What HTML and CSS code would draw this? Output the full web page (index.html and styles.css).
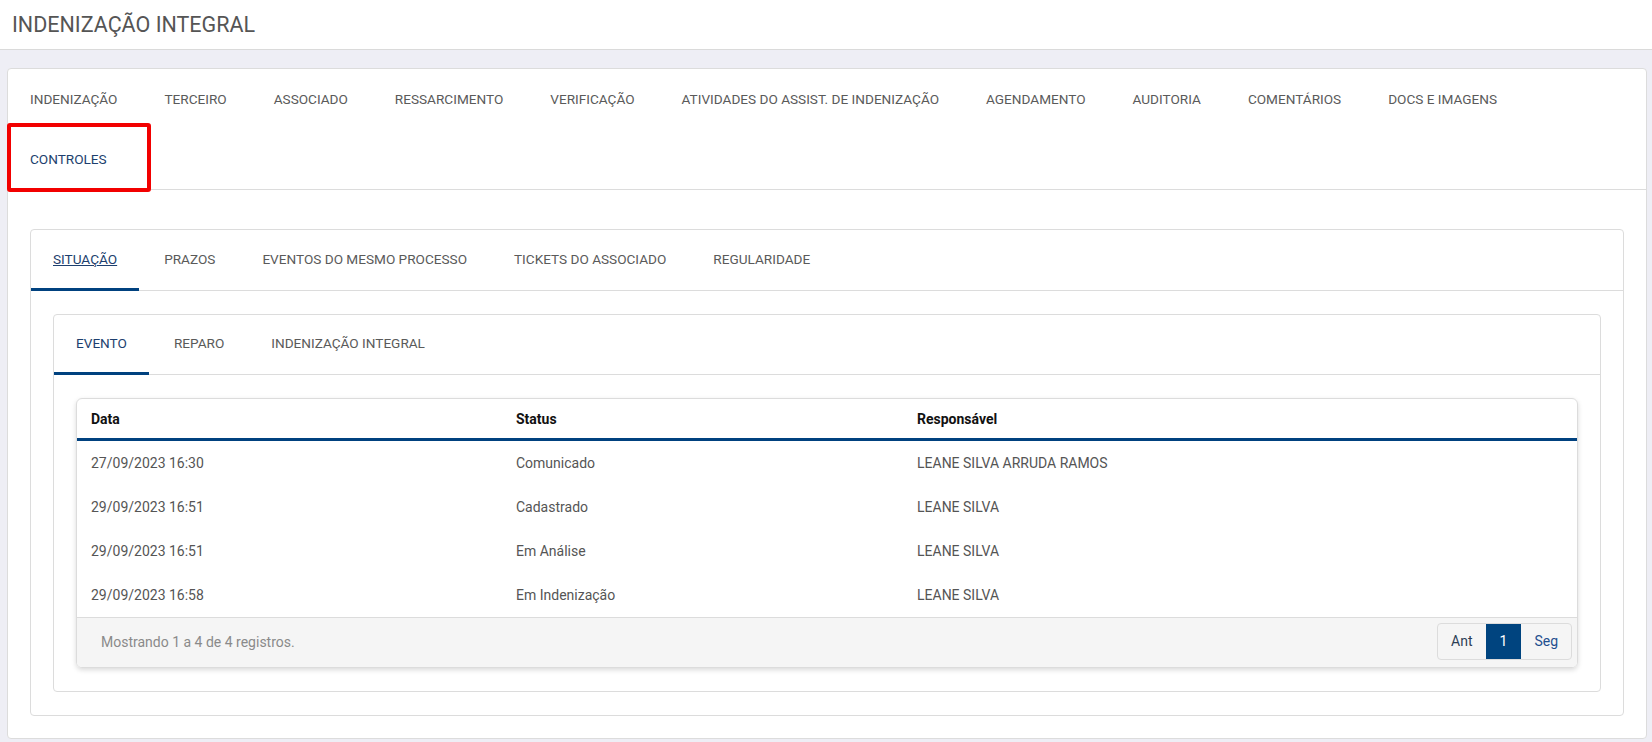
FILE: index.html
```html
<!DOCTYPE html>
<html lang="pt-BR">
<head>
  <meta charset="UTF-8">
  <title>Indenização Integral</title>
  <link rel="stylesheet" href="styles.css">
</head>
<body>

  <header class="page-header">
    <h1>INDENIZAÇÃO INTEGRAL</h1>
  </header>

  <div class="main-card">
    <ul class="main-tabs">
      <li><a href="#">INDENIZAÇÃO</a></li>
      <li><a href="#">TERCEIRO</a></li>
      <li><a href="#">ASSOCIADO</a></li>
      <li><a href="#">RESSARCIMENTO</a></li>
      <li><a href="#">VERIFICAÇÃO</a></li>
      <li><a href="#">ATIVIDADES DO ASSIST. DE INDENIZAÇÃO</a></li>
      <li><a href="#">AGENDAMENTO</a></li>
      <li><a href="#">AUDITORIA</a></li>
      <li><a href="#">COMENTÁRIOS</a></li>
      <li><a href="#">DOCS E IMAGENS</a></li>
      <li class="active marked"><a href="#">CONTROLES</a></li>
    </ul>

    <div class="sub-card">
      <ul class="sub-tabs">
        <li class="active"><a href="#" class="underlined">SITUAÇÃO</a></li>
        <li><a href="#">PRAZOS</a></li>
        <li><a href="#">EVENTOS DO MESMO PROCESSO</a></li>
        <li><a href="#">TICKETS DO ASSOCIADO</a></li>
        <li><a href="#">REGULARIDADE</a></li>
      </ul>

      <div class="sub-card inner">
        <ul class="sub-tabs small">
          <li class="active"><a href="#">EVENTO</a></li>
          <li><a href="#">REPARO</a></li>
          <li><a href="#">INDENIZAÇÃO INTEGRAL</a></li>
        </ul>

        <div class="table-card">
          <table>
            <thead>
              <tr>
                <th class="col-data">Data</th>
                <th class="col-status">Status</th>
                <th>Responsável</th>
              </tr>
            </thead>
            <tbody>
              <tr><td>27/09/2023 16:30</td><td>Comunicado</td><td>LEANE SILVA ARRUDA RAMOS</td></tr>
              <tr><td>29/09/2023 16:51</td><td>Cadastrado</td><td>LEANE SILVA</td></tr>
              <tr><td>29/09/2023 16:51</td><td>Em Análise</td><td>LEANE SILVA</td></tr>
              <tr><td>29/09/2023 16:58</td><td>Em Indenização</td><td>LEANE SILVA</td></tr>
            </tbody>
          </table>
          <div class="table-footer">
            <span class="info">Mostrando 1 a 4 de 4 registros.</span>
            <div class="pagination">
              <a href="#" class="prev">Ant</a>
              <a href="#" class="current">1</a>
              <a href="#" class="next">Seg</a>
            </div>
          </div>
        </div>
      </div>
    </div>
  </div>

</body>
</html>
```

FILE: styles.css
```css
body {
  font-family: Roboto, "Noto Sans", sans-serif;
  margin: 0;
  padding: 0;
  background: #eeeef5;
  color: #555;
  font-size: 14px;
}

a {
  text-decoration: none;
  color: inherit;
}

.page-header {
  background: #fff;
  height: 49px;
  border-bottom: 1px solid #dadada;
  display: flex;
  align-items: center;
  padding-left: 12px;
}

.page-header h1 {
  margin: 0;
  font-size: 21.5px;
  font-weight: 400;
  color: #555;
}

.main-card {
  background: #fff;
  border: 1px solid #dcdcdc;
  border-radius: 4px;
  margin: 18px 5px 0 7px;
  padding-bottom: 22px;
}

.main-tabs {
  list-style: none;
  margin: 0;
  padding: 0 60px 0 0;
  display: flex;
  flex-wrap: wrap;
  border-bottom: 1px solid #dcdcdc;
  font-size: 13.6px;
}

.main-tabs li {
  margin-right: 3px;
  position: relative;
}

.main-tabs a {
  display: block;
  padding: 0 22px;
  line-height: 60px;
  color: #5a5a5a;
}

.main-tabs li.active a {
  color: #1d3f6e;
}

.main-tabs li.marked::after {
  content: "";
  position: absolute;
  left: -1px;
  top: -6px;
  width: 144px;
  height: 69px;
  box-sizing: border-box;
  border: 4px solid #f20000;
  border-radius: 3px;
}

.sub-card {
  background: #fff;
  border: 1px solid #dcdcdc;
  border-radius: 4px;
  margin: 39px 22px 0 22px;
  padding-bottom: 23px;
}

.sub-card.inner {
  margin: 23px 22px 0 22px;
}

.sub-tabs {
  list-style: none;
  margin: 0;
  padding: 0;
  display: flex;
  border-bottom: 1px solid #dcdcdc;
  font-size: 13.6px;
}

.sub-tabs li {
  margin-right: 3px;
  margin-bottom: -1px;
  border-bottom: 3px solid transparent;
}

.sub-tabs li.active {
  border-bottom-color: #00417f;
}

.sub-tabs a {
  display: block;
  padding: 0 22px;
  line-height: 58px;
  color: #5a5a5a;
}

.sub-tabs.small a {
  line-height: 57px;
}

.sub-tabs li.active a {
  color: #1d3f6e;
}

.sub-tabs a.underlined {
  text-decoration: underline;
}

.table-card {
  margin: 23px 22px 0 22px;
  border: 1px solid #dcdcdc;
  border-radius: 6px;
  overflow: hidden;
  box-shadow: 0 2px 5px rgba(0, 0, 0, 0.15);
}

table {
  width: 100%;
  border-collapse: collapse;
}

th {
  text-align: left;
  font-weight: 700;
  color: #111;
  height: 39px;
  padding: 0 14px;
  border-bottom: 3px solid #00417f;
}

.col-data {
  width: 397px;
}

.col-status {
  width: 373px;
}

td {
  height: 44px;
  padding: 0 14px;
  color: #555;
}

.table-footer {
  display: flex;
  align-items: center;
  justify-content: space-between;
  background: #f5f5f5;
  border-top: 1px solid #dcdcdc;
  padding: 5px 5px 7px 24px;
}

.table-footer .info {
  color: #8a8a8a;
}

.pagination {
  display: flex;
  border: 1px solid #dcdcdc;
  border-radius: 4px;
  overflow: hidden;
}

.pagination a {
  line-height: 35px;
  padding: 0 13px;
}

.pagination .prev {
  color: #2d3e55;
}

.pagination .next {
  color: #1f4f8f;
}

.pagination .current {
  background: #00447f;
  color: #fff;
  padding: 0 14px;
}
```
